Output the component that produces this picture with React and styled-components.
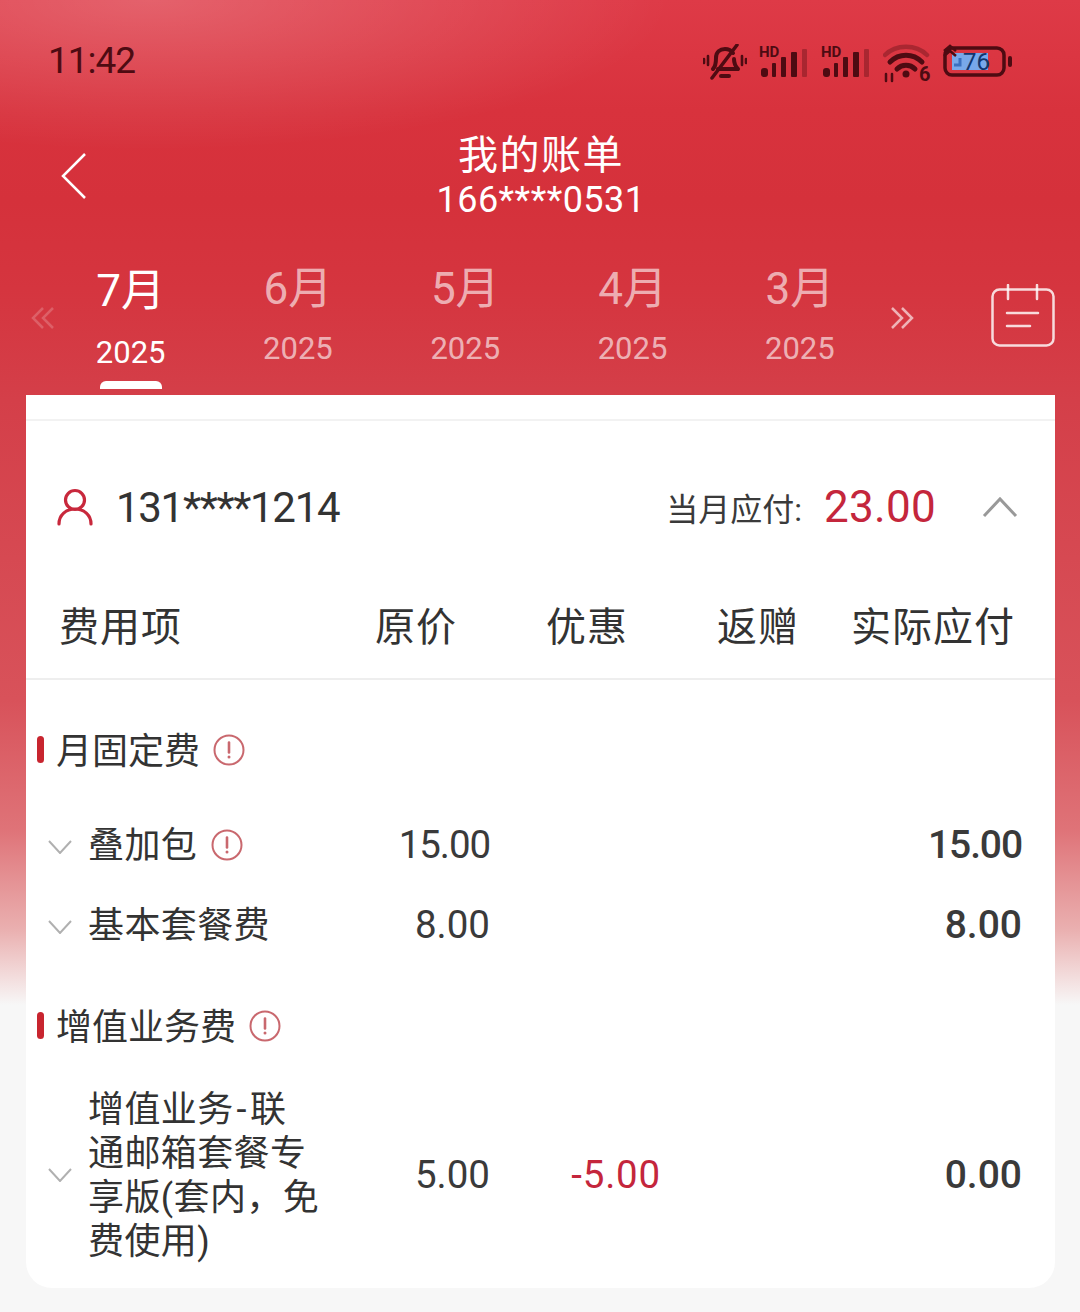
import React from "react";
import styled, { createGlobalStyle, css } from "styled-components";

const FONT = `Roboto, "Noto Sans CJK SC", sans-serif`;

const GlobalStyle = createGlobalStyle`
  html, body {
    margin: 0;
    padding: 0;
    background: #f7f7f7;
  }
  body {
    font-family: ${FONT};
    color: #333;
  }
`;

const Page = styled.div`
  position: relative;
  box-sizing: border-box;
  width: 1080px;
  height: 1312px;
  overflow: hidden;
  background:
    radial-gradient(ellipse 520px 150px at 150px 0, rgba(255, 255, 255, 0.2), rgba(255, 255, 255, 0)),
    linear-gradient(180deg, #de3a47 0, #d8323d 110px, #d5313b 200px, #d5353f 290px, #d43f49 400px, #d8525a 700px, #df7378 830px, #eab0b0 930px, #f4e4e4 985px, #f7f7f7 1005px);
`;

const StatusBar = styled.div`
  box-sizing: border-box;
  height: 130px;
  padding: 42px 67px 0 48px;
  display: flex;
  justify-content: space-between;
  align-items: flex-start;
`;

const Time = styled.div`
  font-size: 37px;
  line-height: 38px;
  letter-spacing: -1px;
  color: #4e0b12;
`;

const StatusIcons = styled.div`
  display: flex;
  align-items: flex-start;
  margin-top: 2px;
  gap: 12px;
  svg { display: block; }
`;

const Nav = styled.div`
  height: 132px;
  display: grid;
  grid-template-columns: 1fr auto 1fr;
`;

const BackSlot = styled.div`
  padding: 23px 0 0 61px;
  svg { display: block; }
`;

const Titles = styled.div`
  padding: 2px 0 0 2px;
  text-align: center;
  color: #fff;
`;

const Title = styled.div`
  font-size: 40px;
  line-height: 47px;
  letter-spacing: 1.5px;
`;

const Phone = styled.div`
  font-size: 36px;
  line-height: 42px;
  letter-spacing: 0.5px;
`;

const TabRow = styled.div`
  box-sizing: border-box;
  height: 133px;
  padding-left: 31px;
  display: flex;
  align-items: flex-start;
`;

const Arrow = styled.div`
  width: 24px;
  margin-top: 44px;
  color: ${p => p.$dim ? "rgba(255,255,255,0.2)" : "rgba(255,255,255,0.62)"};
  svg { display: block; }
`;

const Tabs = styled.div`
  display: flex;
  margin: 0 7px 0 -8px;
`;

const Tab = styled.div`
  width: 167.3px;
  display: flex;
  flex-direction: column;
  align-items: center;
  padding-top: ${p => p.$active ? 3 : 1}px;
  color: ${p => p.$active ? "#fff" : "rgba(255,255,255,0.62)"};
`;

const Month = styled.div`
  font-size: 44px;
  line-height: 52px;
`;

const Year = styled.div`
  font-size: 31px;
  line-height: 40px;
  margin-top: ${p => p.$active ? 16 : 14}px;
`;

const Underline = styled.div`
  width: 62px;
  height: 8px;
  margin-top: 8px;
  background: #fff;
  border-radius: 6px 6px 0 0;
`;

const CalendarSlot = styled.div`
  margin: 22px 0 0 77px;
  svg { display: block; }
`;

const Card = styled.div`
  box-sizing: border-box;
  margin: 0 25px 0 26px;
  height: 893px;
  background: #fff;
  border-radius: 0 0 26px 26px;
`;

const TopStrip = styled.div`
  height: 24px;
  border-bottom: 2px solid #f2f2f2;
`;

const Summary = styled.div`
  box-sizing: border-box;
  height: 172px;
  padding: 0 37px 0 31px;
  display: flex;
  align-items: center;
  justify-content: space-between;
  svg { display: block; }
`;

const Account = styled.div`
  display: flex;
  align-items: center;
  gap: 23px;
  font-size: 42px;
  letter-spacing: -1.3px;
  color: #333;
`;

const Due = styled.div`
  display: flex;
  align-items: center;
`;

const DueLabel = styled.span`
  font-size: 32px;
  color: #3a3a3a;
`;

const DueValue = styled.span`
  margin: 0 46px 0 22px;
  font-size: 44px;
  letter-spacing: 0.3px;
  color: #c4263c;
`;

const tableColumns = css`
  display: grid;
  grid-template-columns: 293px 171px 171px 171px 190px;
`;

const TableHead = styled.div`
  ${tableColumns}
  box-sizing: border-box;
  height: 87px;
  align-items: center;
  padding-bottom: 24px;
  border-bottom: 2px solid #eeeeee;
  font-size: 40px;
  letter-spacing: 1px;
  color: #333;
`;

const HeadCell = styled.div`
  padding-left: ${p => p.$left}px;
  white-space: nowrap;
`;

const Section = styled.div`
  display: flex;
  align-items: center;
  height: 44px;
  margin-top: ${p => p.$top}px;
  padding-left: 11px;
  font-size: 36px;
  color: #333;
`;

const SectionBar = styled.div`
  width: 7px;
  height: 27px;
  margin: 3px 12px 0 0;
  border-radius: 4px;
  background: #c8252f;
`;

const Info = styled.svg`
  display: block;
  margin-left: ${p => p.$left}px;
  margin-top: ${p => p.$top}px;
`;

const Row = styled.div`
  ${tableColumns}
  align-items: center;
  min-height: 80px;
  margin-top: ${p => p.$top || 0}px;
`;

const NameCell = styled.div`
  display: flex;
  align-items: center;
  padding-left: 22px;
`;

const Chevron = styled.svg`
  display: block;
  flex: none;
  margin: ${p => p.$nudge ? 6 : 0}px 16px 0 0;
`;

const ItemName = styled.div`
  flex: ${p => p.$fit ? "none" : 1};
  padding-top: 3px;
  font-size: 36px;
  line-height: 44px;
  letter-spacing: 0.4px;
  white-space: nowrap;
  color: #333;
`;

const Hyphen = styled.span`
  margin: 0 3px;
`;

const Value = styled.div`
  text-align: right;
  font-size: ${p => p.$strong ? 39 : 38.5}px;
  line-height: 44px;
  padding-top: 1px;
  letter-spacing: ${p => p.$tight ? -1.1 : p.$red ? 0.8 : 0}px;
  color: ${p => p.$red ? "#c4263c" : "#3a3a3a"};
  font-weight: ${p => p.$strong ? 500 : 400};
`;

const BellOff = () => (
  <svg width="44" height="36" viewBox="0 0 44 36" fill="none" stroke="#4e0b12" strokeWidth="4" strokeLinecap="round" strokeLinejoin="round">
    <path d="M10 25c3-3 3-7 3-11 0-6 4-9 9-9 3 0 6 1 8 4" />
    <path d="M31 15c0 4 1 7 4 10H15" />
    <path d="M18 32h8" />
    <path d="M34 1 9 34" strokeWidth="3.5" />
    <path d="M5 12v9M1 15v4M39 12v9M43 15v4" strokeWidth="2.6" />
  </svg>
);

const Signal = () => (
  <svg width="50" height="36" viewBox="0 0 50 36">
    <text x="0" y="13" fontFamily="Roboto, sans-serif" fontWeight="700" fontSize="15" fill="#4e0b12">HD</text>
    <g fill="#4e0b12">
      <rect x="2" y="24" width="7" height="9" rx="3" />
      <rect x="13" y="19" width="4" height="14" rx="1" />
      <rect x="22" y="13" width="5" height="20" rx="1" />
      <rect x="32" y="8" width="6" height="25" rx="1" />
    </g>
    <rect x="43" y="5" width="5" height="28" rx="1" fill="#4e0b12" opacity="0.35" />
  </svg>
);

const Wifi = () => (
  <svg width="48" height="42" viewBox="0 0 48 42" fill="none" stroke="#4e0b12" strokeLinecap="round">
    <path d="M2 11C13 0 33 0 44 11" strokeWidth="4.5" opacity="0.35" />
    <path d="M7 18c9-9 23-9 32 0" strokeWidth="5" />
    <path d="M14 25c5-5 13-5 18 0" strokeWidth="5" />
    <circle cx="23" cy="30" r="3.5" fill="#4e0b12" stroke="none" />
    <path d="M3 30v7M9 37v-7" strokeWidth="2.5" />
    <text x="36" y="37" fontFamily="Roboto, sans-serif" fontWeight="700" fontSize="20" fill="#4e0b12" stroke="none">6</text>
  </svg>
);

const Battery = () => (
  <svg width="70" height="36" viewBox="0 0 70 36" fill="none">
    <rect x="9" y="9" width="36" height="17" fill="#78a8ea" />
    <rect x="2" y="4" width="59" height="27" rx="7" stroke="#4e0b12" strokeWidth="3.5" />
    <rect x="65" y="12" width="4" height="11" rx="2" fill="#4e0b12" />
    <path d="M1 7l6-5 6 5M1 12l6-5 6 5" stroke="#4e0b12" strokeWidth="2.5" />
    <path d="M17 14v7h-6" stroke="#3a6fc0" strokeWidth="3" />
    <text x="20" y="26" fontFamily="Roboto, sans-serif" fontSize="24" fill="#12366e">76</text>
  </svg>
);

const Back = () => (
  <svg width="26" height="46" viewBox="0 0 26 46" fill="none" stroke="#fff" strokeWidth="2.5">
    <path d="M24 1 2 23l22 22" />
  </svg>
);

const DoubleLeft = () => (
  <svg width="24" height="24" viewBox="0 0 24 24" fill="none" stroke="currentColor" strokeWidth="2.5">
    <path d="M12 2 2 12l10 10M22 2 12 12l10 10" />
  </svg>
);

const DoubleRight = () => (
  <svg width="24" height="24" viewBox="0 0 24 24" fill="none" stroke="currentColor" strokeWidth="2.5">
    <path d="M2 2l10 10L2 22M12 2l10 10-10 10" />
  </svg>
);

const Calendar = () => (
  <svg width="64" height="64" viewBox="0 0 64 64" fill="none" stroke="rgba(255,255,255,0.82)" strokeWidth="2.5" strokeLinecap="round">
    <rect x="1.5" y="5.5" width="61" height="56" rx="7" />
    <path d="M17 1v14M46 1v14" />
    <path d="M16 29h31M16 42h23" />
  </svg>
);

const Person = () => (
  <svg width="36" height="38" viewBox="0 0 36 38" fill="none" stroke="#c8283c" strokeWidth="3.2" strokeLinecap="round">
    <circle cx="18" cy="12" r="9.5" />
    <path d="M2 36c0-9 7-15 16-15s16 6 16 15" />
  </svg>
);

const Up = () => (
  <svg width="36" height="22" viewBox="0 0 36 22" fill="none" stroke="#999" strokeWidth="3">
    <path d="M2 20 18 3l16 17" />
  </svg>
);

const Down = ({ nudge }) => (
  <Chevron $nudge={nudge} width="24" height="14" viewBox="0 0 24 14" fill="none" stroke="#b0b0b0" strokeWidth="2">
    <path d="M1 1l11 12L23 1" />
  </Chevron>
);

const InfoIcon = ({ left, top = 2 }) => (
  <Info $left={left} $top={top} width="32" height="32" viewBox="0 0 32 32" fill="none" stroke="#c9686e">
    <circle cx="16" cy="16" r="14.5" strokeWidth="2" />
    <path d="M16 8.5v10" strokeWidth="2.6" strokeLinecap="round" />
    <circle cx="16" cy="23" r="1.5" fill="#c9686e" stroke="none" />
  </Info>
);

const months = [
  { month: "7月", active: true },
  { month: "6月" },
  { month: "5月" },
  { month: "4月" },
  { month: "3月" },
];

export default function App() {
  return (
    <Page>
      <GlobalStyle />
      <StatusBar>
        <Time>11:42</Time>
        <StatusIcons>
          <BellOff />
          <Signal />
          <Signal />
          <Wifi />
          <Battery />
        </StatusIcons>
      </StatusBar>

      <Nav>
        <BackSlot><Back /></BackSlot>
        <Titles>
          <Title>我的账单</Title>
          <Phone>166****0531</Phone>
        </Titles>
        <div />
      </Nav>

      <TabRow>
        <Arrow $dim><DoubleLeft /></Arrow>
        <Tabs>
          {months.map(({ month, active }) => (
            <Tab key={month} $active={active}>
              <Month>{month}</Month>
              <Year $active={active}>2025</Year>
              {active ? <Underline /> : null}
            </Tab>
          ))}
        </Tabs>
        <Arrow><DoubleRight /></Arrow>
        <CalendarSlot><Calendar /></CalendarSlot>
      </TabRow>

      <Card>
        <TopStrip />
        <Summary>
          <Account><Person />131****1214</Account>
          <Due>
            <DueLabel>当月应付:</DueLabel>
            <DueValue>23.00</DueValue>
            <Up />
          </Due>
        </Summary>

        <TableHead>
          <HeadCell $left={33}>费用项</HeadCell>
          <HeadCell $left={56}>原价</HeadCell>
          <HeadCell $left={56}>优惠</HeadCell>
          <HeadCell $left={56}>返赠</HeadCell>
          <HeadCell $left={19}>实际应付</HeadCell>
        </TableHead>

        <Section $top={46}>
          <SectionBar />月固定费<InfoIcon left={13} top={4} />
        </Section>
        <Row $top={34}>
          <NameCell>
            <Down nudge />
            <ItemName $fit>叠加包</ItemName>
            <InfoIcon left={14} />
          </NameCell>
          <Value $tight>15.00</Value>
          <Value />
          <Value />
          <Value $strong $tight>15.00</Value>
        </Row>
        <Row>
          <NameCell>
            <Down nudge />
            <ItemName>基本套餐费</ItemName>
          </NameCell>
          <Value>8.00</Value>
          <Value />
          <Value />
          <Value $strong>8.00</Value>
        </Row>

        <Section $top={38}>
          <SectionBar />增值业务费<InfoIcon left={13} top={4} />
        </Section>
        <Row $top={39}>
          <NameCell>
            <Down />
            <ItemName>增值业务<Hyphen>-</Hyphen>联<br />通邮箱套餐专<br />享版(套内，免<br />费使用)</ItemName>
          </NameCell>
          <Value>5.00</Value>
          <Value $red>-5.00</Value>
          <Value />
          <Value $strong>0.00</Value>
        </Row>
      </Card>
    </Page>
  );
}
